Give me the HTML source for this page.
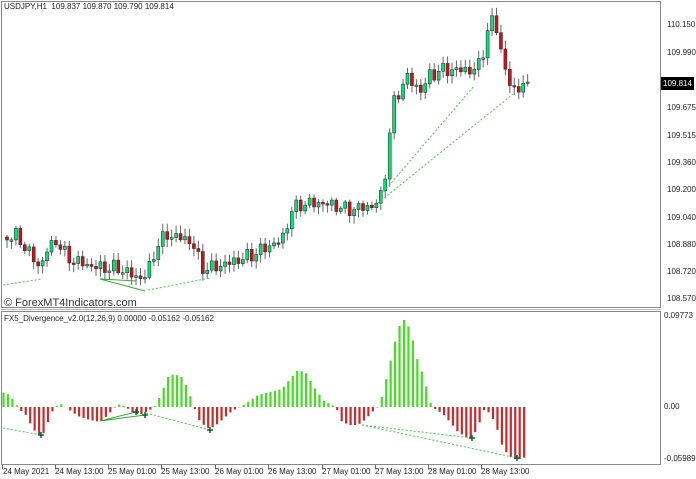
<!DOCTYPE html>
<html><head><meta charset="utf-8"><style>
html,body{margin:0;padding:0;background:#fff;}
body{width:696px;height:479px;overflow:hidden;position:relative;font-family:"Liberation Sans",sans-serif;}
.t{position:absolute;font-size:8px;color:#222;white-space:nowrap;}
</style></head><body>
<svg id="s" width="696" height="479" style="position:absolute;left:0;top:0">
<rect x="1.5" y="1.5" width="659" height="306" fill="none" stroke="#888"/>
<rect x="1.5" y="311.5" width="659" height="153" fill="none" stroke="#888"/>
<line x1="1" y1="309.5" x2="661" y2="309.5" stroke="#bbb"/>
<g id="g"></g>
</svg>
<div class="t" style="left:4px;top:2px">USDJPY,H1&nbsp; 109.837 109.870 109.790 109.814</div>
<div class="t" style="left:4px;top:314px">FX5_Divergence_v2.0(12,26,9) 0.00000 -0.05162 -0.05162</div>
<div class="t" style="left:4px;top:297px;font-size:11px;color:#333">© ForexMT4Indicators.com</div>
<div class="t" style="left:667px;top:20px">110.150</div>
<div class="t" style="left:667px;top:48px">109.990</div>
<div class="t" style="left:667px;top:103px">109.675</div>
<div class="t" style="left:667px;top:131px">109.515</div>
<div class="t" style="left:667px;top:158px">109.360</div>
<div class="t" style="left:667px;top:185px">109.200</div>
<div class="t" style="left:667px;top:213px">109.040</div>
<div class="t" style="left:667px;top:240px">108.880</div>
<div class="t" style="left:667px;top:267px">108.720</div>
<div class="t" style="left:667px;top:294px">108.570</div>
<div class="t" style="left:661px;top:77px;width:33px;height:13px;background:#000;color:#fff;line-height:13px;padding-left:2px;box-sizing:border-box">109.814</div>
<div class="t" style="left:664px;top:311px">0.09773</div>
<div class="t" style="left:664px;top:402px">0.00</div>
<div class="t" style="left:664px;top:454px">-0.05989</div>
<div class="t" style="left:3px;top:467px">24 May 2021</div>
<div class="t" style="left:55px;top:467px">24 May 13:00</div>
<div class="t" style="left:108px;top:467px">25 May 01:00</div>
<div class="t" style="left:161px;top:467px">25 May 13:00</div>
<div class="t" style="left:215px;top:467px">26 May 01:00</div>
<div class="t" style="left:268px;top:467px">26 May 13:00</div>
<div class="t" style="left:322px;top:467px">27 May 01:00</div>
<div class="t" style="left:375px;top:467px">27 May 13:00</div>
<div class="t" style="left:428px;top:467px">28 May 01:00</div>
<div class="t" style="left:481px;top:467px">28 May 13:00</div>
<script>
var g=document.getElementById('g'),h='';
function ip(k,x){for(var i=0;i<k.length-1;i++){if(x<=k[i+1][0]){var a=k[i],b=k[i+1];return a[1]+(b[1]-a[1])*(x-a[0])/(b[0]-a[0]);}}return k[k.length-1][1];}
var ck=[[5,237],[15,236],[25,250],[38,268],[45,250],[55,240],[65,258],[85,265],[100,268],[115,268],[125,272],[135,278],[145,275],[155,245],[165,235],[180,238],[190,242],[200,268],[210,268],[230,262],[250,255],[265,247],[280,240],[290,210],[300,204],[320,203],[335,206],[345,210],[370,206],[378,200],[383,175],[388,130],[392,103],[398,90],[405,76],[412,86],[420,90],[428,75],[440,70],[460,70],[475,70],[482,48],[488,20],[494,25],[500,55],[506,82],[512,90],[520,85],[527,81]];
var n=118,prev=ip(ck,5);
for(var i=0;i<n;i++){var x=5+i*4.45;if(x>528)break;var c=ip(ck,x)+Math.sin(i*2.3)*5+Math.cos(i*1.7)*3;if(i==n-1)c=82;
var o=prev,tp=Math.min(o,c),bt=Math.max(o,c);if(bt-tp<1.5){bt=tp+1.5;}
var hi=tp-2-Math.abs(Math.sin(i*3.1))*6,lo=bt+2+Math.abs(Math.cos(i*2.7))*6;
h+='<line x1="'+(x+2)+'" y1="'+hi+'" x2="'+(x+2)+'" y2="'+lo+'" stroke="#666"/>';
h+='<rect x="'+(x+0.5)+'" y="'+tp+'" width="3" height="'+(bt-tp)+'" fill="'+(c<o?'#00e676':'#d01018')+'" stroke="#333" stroke-width="0.6"/>';
prev=c;}
var hk=[[2,15],[10,12],[16,3],[20,-3],[26,-8],[32,-20],[38,-28],[42,-30],[48,-15],[53,-3],[58,2],[63,3],[66,0],[72,-5],[80,-10],[90,-13],[100,-15],[108,-8],[114,-1],[120,3],[126,0],[132,-5],[140,-8],[150,-3],[156,2],[162,15],[168,30],[174,33],[182,30],[188,18],[194,0],[200,-15],[208,-21],[214,-20],[222,-13],[232,-4],[240,0],[248,5],[258,12],[270,15],[282,18],[290,28],[298,37],[306,34],[314,20],[324,6],[336,0],[342,-15],[350,-18],[358,-18],[366,-12],[372,-5],[376,-2],[380,3],[386,27],[392,52],[398,78],[402,86],[406,88],[410,76],[414,63],[418,45],[424,30],[430,5],[436,-3],[442,-6],[450,-15],[458,-25],[466,-30],[472,-31],[478,-20],[484,-3],[490,-6],[496,-18],[502,-38],[508,-48],[514,-52],[520,-52],[526,-50]];
for(var i=0;i<n;i++){var x=3.5+i*4.45;if(x>528)break;var v=ip(hk,x);
var y=407-v;h+='<line x1="'+x+'" y1="407" x2="'+x+'" y2="'+y+'" stroke="'+(v>=0?'#44dd22':'#cc2a2a')+'" stroke-width="2.2"/>';}
var d='stroke="#4c4" stroke-dasharray="2,2" fill="none"';
h+='<path d="M3 285L42 279M148 290L210 278M381 195L474 86M378 203L513 94" '+d+'/>';
h+='<path d="M100 279L136 281M100 279L145 291" stroke="#3a3" fill="none"/>';
h+='<path d="M3 428L41 435M146 413L210 430M362 425L472 438M362 425L517 458" '+d+'/>';
h+='<path d="M100 421L136 412M100 421L145 415" stroke="#3a3" fill="none"/>';
[[41,435],[136,412],[145,415],[210,430],[472,438],[517,458]].forEach(function(p){h+='<path d="M'+(p[0]-3)+' '+p[1]+'h6M'+p[0]+' '+(p[1]-3)+'v6" stroke="#063" stroke-width="1.5"/>';});
[2,55,108,161,215,268,322,375,428,481].forEach(function(x){h+='<line x1="'+(x+0.5)+'" y1="465" x2="'+(x+0.5)+'" y2="469" stroke="#666"/>';});
g.innerHTML=h;
</script>
</body></html>
